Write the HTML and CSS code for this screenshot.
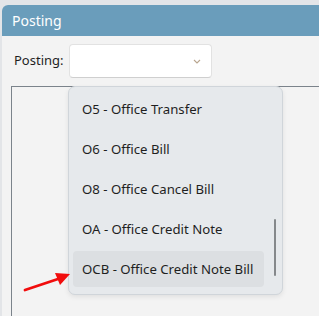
FILE: index.html
```html
<!DOCTYPE html>
<html lang="en">
<head>
  <meta charset="UTF-8">
  <title>Posting</title>
  <link rel="stylesheet" href="styles.css">
</head>
<body>
  <div class="window">
    <div class="titlebar">Posting</div>
    <div class="toolbar">
      <label for="posting">Posting:</label>
      <div class="select" id="posting">
        <svg class="chevron" width="8" height="5" viewBox="0 0 8 5">
          <polyline points="1,1 4,4 7,1" fill="none" stroke="#b9a68f" stroke-width="1.1"/>
        </svg>
      </div>
    </div>
    <div class="panel"></div>

    <div class="dropdown">
      <ul class="options">
        <li>O5 - Office Transfer</li>
        <li>O6 - Office Bill</li>
        <li>O8 - Office Cancel Bill</li>
        <li>OA - Office Credit Note</li>
        <li class="hover">OCB - Office Credit Note Bill</li>
      </ul>
      <div class="scrollbar"></div>
    </div>

    <svg class="arrow" width="50" height="22" viewBox="0 0 50 22">
      <line x1="2" y1="19" x2="38" y2="7" stroke="#f10d0d" stroke-width="2.8" stroke-linecap="round"/>
      <polygon points="47,3 32,2 37,14" fill="#f10d0d"/>
    </svg>
  </div>
</body>
</html>
```

FILE: styles.css
```css
body {
  margin: 0;
  padding: 5px 0 0 2px;
  background-color: #e3e5e8;
  font-family: 'Noto Sans', 'Open Sans', sans-serif;
  color: #222222;
  overflow: hidden;
}
.window {
  position: relative;
  height: 311px;
  background-color: #f3f3f3;
  border-radius: 6px 0 0 0;
  overflow: hidden;
}
.titlebar {
  height: 31px;
  line-height: 31px;
  padding-left: 10px;
  background-color: #6a9dbb;
  color: #ffffff;
  font-size: 14px;
}
.toolbar {
  display: flex;
  align-items: center;
  height: 48px;
  padding-left: 12px;
  gap: 5px;
}
.toolbar label {
  font-size: 13px;
  color: #1f1f1f;
}
.select {
  position: relative;
  width: 141px;
  height: 32px;
  margin-top: 1px;
  background-color: #ffffff;
  border: 1px solid #e2e2e2;
  border-bottom-color: #cfcfcf;
  border-radius: 4px;
}
.chevron {
  position: absolute;
  right: 10px;
  top: 14px;
}
.panel {
  height: 240px;
  margin-left: 9px;
  margin-top: 2px;
  border-top: 1px solid #7b838b;
  border-left: 1px solid #7b838b;
}
.dropdown {
  position: absolute;
  left: 66px;
  top: 81px;
  width: 213px;
  height: 207px;
  background-color: #e6e9ec;
  border: 1px solid #d0d5da;
  border-radius: 7px;
  box-shadow: 0 2px 5px rgba(0,0,0,0.08);
}
.options {
  list-style: none;
  margin: 0;
  padding: 4px 0 0 4px;
  display: flex;
  flex-direction: column;
  gap: 4px;
}
.options li {
  width: 182px;
  height: 36px;
  line-height: 36px;
  padding-left: 9px;
  font-size: 13.2px;
  color: #1f1f1f;
  border-radius: 4px;
  white-space: nowrap;
}
.options li.hover {
  background-color: #dcdfe2;
}
.scrollbar {
  position: absolute;
  left: 205px;
  top: 132px;
  width: 2px;
  height: 57px;
  background-color: #85888b;
  border-radius: 1px;
}
.arrow {
  position: absolute;
  left: 21px;
  top: 266px;
}
```
